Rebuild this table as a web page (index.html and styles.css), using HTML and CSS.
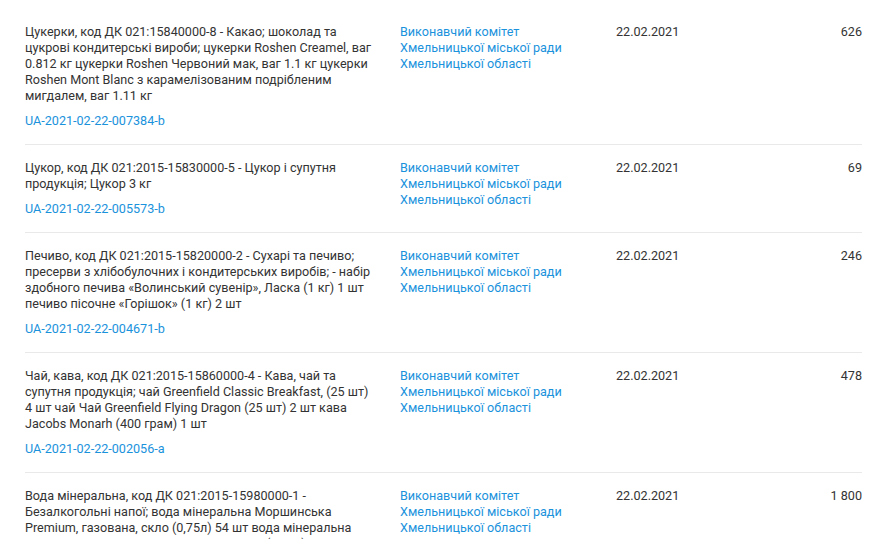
FILE: index.html
```html
<!DOCTYPE html>
<html lang="uk">
<head>
  <meta charset="UTF-8" />
  <meta name="viewport" content="width=device-width, initial-scale=1" />
  <title>Закупівлі</title>
  <link rel="stylesheet" href="styles.css">
</head>
<body>

  <div class="tenders">

    <div class="tender">
      <div class="desc">
        <p>Цукерки, код ДК 021:15840000-8 - Какао; шоколад та цукрові кондитерські вироби; цукерки Roshen Creamel, ваг 0.812 кг цукерки Roshen Червоний мак, ваг 1.1 кг цукерки Roshen Mont Blanc з карамелізованим подрібленим мигдалем, ваг 1.11 кг</p>
        <a href="#" class="tender-id">UA-2021-02-22-007384-b</a>
      </div>
      <div class="org"><a href="#">Виконавчий комітет Хмельницької міської ради Хмельницької області</a></div>
      <div class="date">22.02.2021</div>
      <div class="amount">626</div>
    </div>

    <div class="tender">
      <div class="desc">
        <p>Цукор, код ДК 021:2015-15830000-5 - Цукор і супутня продукція; Цукор 3 кг</p>
        <a href="#" class="tender-id">UA-2021-02-22-005573-b</a>
      </div>
      <div class="org"><a href="#">Виконавчий комітет Хмельницької міської ради Хмельницької області</a></div>
      <div class="date">22.02.2021</div>
      <div class="amount">69</div>
    </div>

    <div class="tender">
      <div class="desc">
        <p>Печиво, код ДК 021:2015-15820000-2 - Сухарі та печиво; пресерви з хлібобулочних і кондитерських виробів; - набір здобного печива «Волинський сувенір», Ласка (1 кг) 1 шт печиво пісочне «Горішок» (1 кг) 2 шт</p>
        <a href="#" class="tender-id">UA-2021-02-22-004671-b</a>
      </div>
      <div class="org"><a href="#">Виконавчий комітет Хмельницької міської ради Хмельницької області</a></div>
      <div class="date">22.02.2021</div>
      <div class="amount">246</div>
    </div>

    <div class="tender">
      <div class="desc">
        <p>Чай, кава, код ДК 021:2015-15860000-4 - Кава, чай та супутня продукція; чай Greenfield Classic Breakfast, (25 шт) 4 шт чай Чай Greenfield Flying Dragon (25 шт) 2 шт кава Jacobs Monarh (400 грам) 1 шт</p>
        <a href="#" class="tender-id">UA-2021-02-22-002056-a</a>
      </div>
      <div class="org"><a href="#">Виконавчий комітет Хмельницької міської ради Хмельницької області</a></div>
      <div class="date">22.02.2021</div>
      <div class="amount">478</div>
    </div>

    <div class="tender">
      <div class="desc">
        <p>Вода мінеральна, код ДК 021:2015-15980000-1 - Безалкогольні напої; вода мінеральна Моршинська Premium, газована, скло (0,75л) 54 шт вода мінеральна Моршинська Premium, негазована, скло (0,75л) 54 шт</p>
        <a href="#" class="tender-id">UA-2021-02-22-001120-b</a>
      </div>
      <div class="org"><a href="#">Виконавчий комітет Хмельницької міської ради Хмельницької області</a></div>
      <div class="date">22.02.2021</div>
      <div class="amount">1 800</div>
    </div>

  </div>

</body>
</html>
```

FILE: styles.css
```css
body {
  margin: 0;
  background: #ffffff;
  font-family: Roboto, 'Liberation Sans', sans-serif;
  font-size: 12.6px;
  line-height: 16px;
  color: #333333;
}

a {
  color: #1a92dc;
  text-decoration: none;
}

.tenders {
  width: 837px;
  margin-left: 25px;
  padding-top: 9px;
}

.tender {
  display: grid;
  grid-template-columns: 375px 216px 1fr 120px;
  padding: 15px 0 15px;
  border-bottom: 1px solid #e9e9e9;
}

.desc {
  padding-right: 25px;
}

.desc p {
  margin: 0;
}

.tender-id {
  display: block;
  margin-top: 9px;
}

.org a {
  display: block;
  max-width: 172px;
}

.amount {
  text-align: right;
}
```
